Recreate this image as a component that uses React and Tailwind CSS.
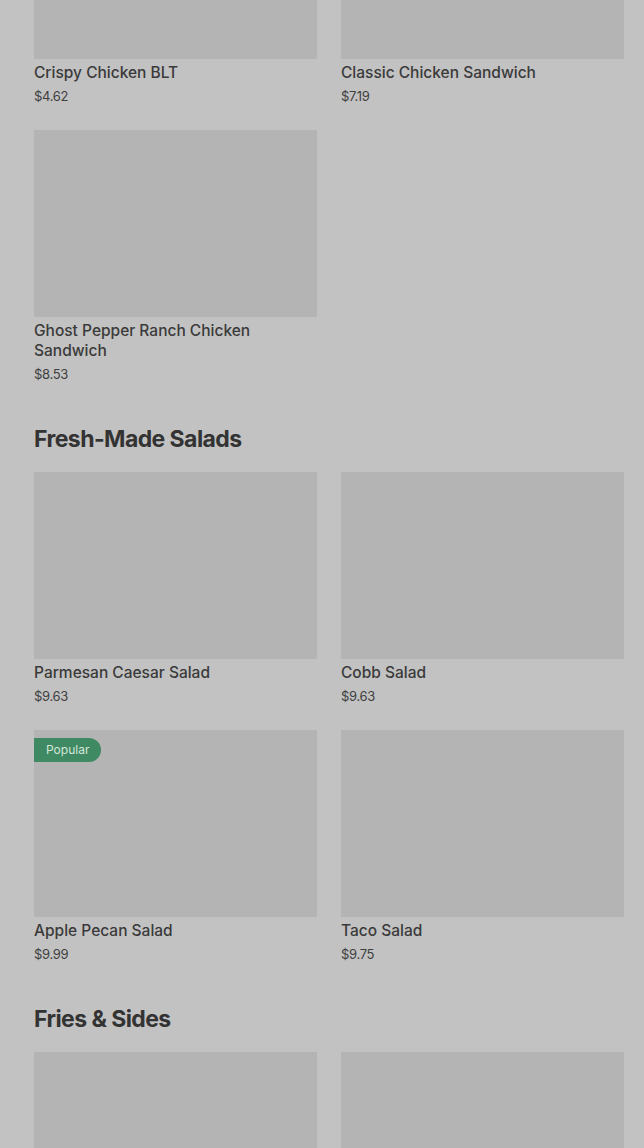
import React from 'react';

const sandwiches = [
    { name: 'Crispy Chicken BLT', price: '$4.62' },
    { name: 'Classic Chicken Sandwich', price: '$7.19' },
    { name: 'Ghost Pepper Ranch Chicken Sandwich', price: '$8.53' },
];

const salads = [
    { name: 'Parmesan Caesar Salad', price: '$9.63' },
    { name: 'Cobb Salad', price: '$9.63' },
    { name: 'Apple Pecan Salad', price: '$9.99', popular: true },
    { name: 'Taco Salad', price: '$9.75' },
];

// below the fold, only the photos show
const sides = [{ id: 'side-1' }, { id: 'side-2' }];

const ItemCard = ({ item }) => (
    <div className="flex flex-col">
        <div className="relative h-[187px] bg-[#b4b4b4]">
            {item.popular && (
                <span className="absolute left-0 top-2 h-6 px-3 flex items-center rounded-r-full bg-[#3f8a63] text-[12px] text-[#d5e6da]">
                    Popular
                </span>
            )}
        </div>
        {item.name && (
            <>
                <div className="mt-1 text-[15.5px] leading-5 font-medium text-[#3a3a3a]">{item.name}</div>
                <div className="mt-[5px] text-[13px] leading-4 text-[#3f3f3f] tracking-tight">{item.price}</div>
            </>
        )}
    </div>
);

const Section = ({ title, items }) => (
    <section className="mt-[43px]">
        <h2 className="text-[23px] leading-7 font-bold tracking-tight text-[#333333] mb-[19px]">{title}</h2>
        <div className="grid grid-cols-2 gap-x-6 gap-y-[26px]">
            {items.map((item) => (
                <ItemCard key={item.name || item.id} item={item} />
            ))}
        </div>
    </section>
);

export default function App() {
    return (
        <div className="min-h-screen h-[1148px] overflow-hidden bg-[#c2c2c2] font-['Inter',sans-serif]">
            <div className="pl-[34px] pr-5 -mt-[128px]">
                <div className="grid grid-cols-2 gap-x-6 gap-y-[26px]">
                    {sandwiches.map((item) => (
                        <ItemCard key={item.name} item={item} />
                    ))}
                </div>
                <Section title="Fresh-Made Salads" items={salads} />
                <Section title="Fries & Sides" items={sides} />
            </div>
        </div>
    );
}
